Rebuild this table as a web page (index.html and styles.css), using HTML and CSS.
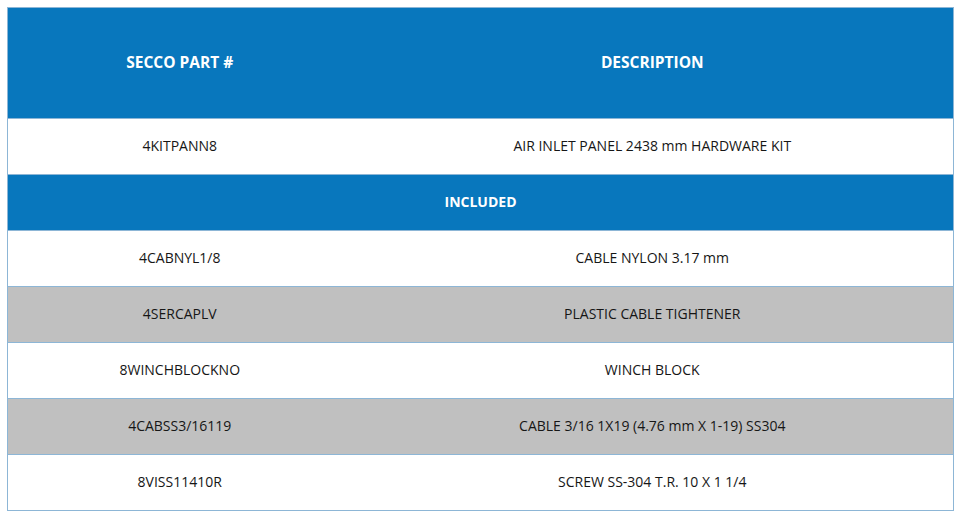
FILE: index.html
```html
<!DOCTYPE html>
<html>
<head>
<meta charset="utf-8">
<link rel="stylesheet" href="styles.css">
</head>
<body>
<table class="parts">
  <colgroup><col class="c1"><col class="c2"></colgroup>
  <thead>
    <tr class="head"><th>SECCO PART #</th><th>DESCRIPTION</th></tr>
  </thead>
  <tbody>
    <tr class="row"><td>4KITPANN8</td><td>AIR INLET PANEL 2438 mm HARDWARE KIT</td></tr>
    <tr class="sub"><th colspan="2">INCLUDED</th></tr>
    <tr class="row"><td>4CABNYL1/8</td><td>CABLE NYLON 3.17 mm</td></tr>
    <tr class="row alt"><td>4SERCAPLV</td><td>PLASTIC CABLE TIGHTENER</td></tr>
    <tr class="row"><td>8WINCHBLOCKNO</td><td>WINCH BLOCK</td></tr>
    <tr class="row alt"><td>4CABSS3/16119</td><td>CABLE 3/16 1X19 (4.76 mm X 1-19) SS304</td></tr>
    <tr class="row"><td>8VISS11410R</td><td>SCREW SS-304 T.R. 10 X 1 1/4</td></tr>
  </tbody>
</table>
</body>
</html>
```

FILE: styles.css
```css
html, body {
  margin: 0;
  padding: 0;
  background: #ffffff;
}
body {
  padding: 7px 7px 0 7px;
  font-family: "Open Sans", "Noto Sans", sans-serif;
  color: #161616;
}
.parts {
  width: 946px;
  border-collapse: collapse;
  table-layout: fixed;
  border: 1px solid #8db6d6;
}
.c1 { width: 344px; }
.c2 { width: 602px; }
.parts th, .parts td {
  text-align: center;
  padding: 0 0 2px 0;
}
.head th {
  height: 108px;
  background: #0877bd;
  color: #ffffff;
  font-weight: 700;
  font-size: 15.5px;
}
.sub th {
  height: 53px;
  background: #0877bd;
  color: #ffffff;
  font-weight: 700;
  font-size: 14px;
  border-top: 1px solid #8db6d6;
}
.row td {
  height: 53px;
  font-size: 14px;
  border-top: 1px solid #8db6d6;
}
.row.alt td {
  background: #c0c0c0;
}
```
